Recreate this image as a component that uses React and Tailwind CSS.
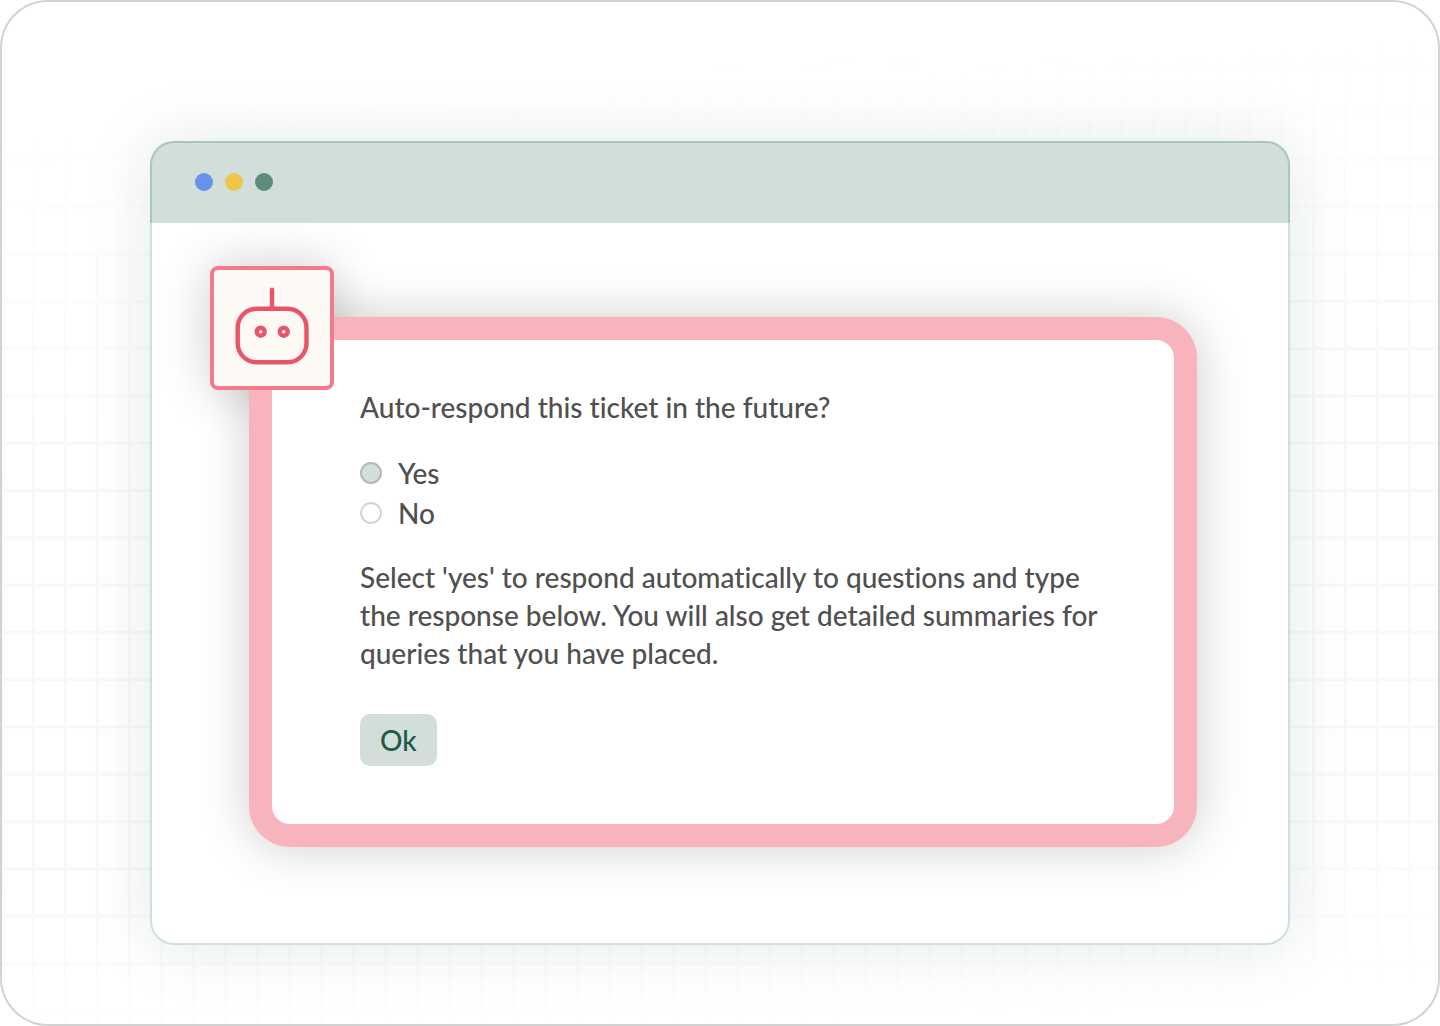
import { useState } from 'react';

const OPTIONS = [
  { value: 'yes', label: 'Yes' },
  { value: 'no', label: 'No' },
];

function GridBackdrop() {
  return (
    <svg
      aria-hidden="true"
      className="absolute inset-0 h-full w-full mask-[linear-gradient(176deg,transparent_10%,black_45%,black_78%,transparent_97%)]"
    >
      <defs>
        <pattern id="grid" x="-2" y="14" width="32" height="47.3" patternUnits="userSpaceOnUse">
          <path d="M1.5 0V47.3M0 1.5H32" stroke="#f8f8f8" strokeWidth="3" fill="none" />
        </pattern>
      </defs>
      <rect width="100%" height="100%" fill="url(#grid)" />
    </svg>
  );
}

function BotIcon() {
  return (
    <svg
      viewBox="0 0 116 116"
      className="h-full w-full"
      fill="none"
      stroke="#ea5466"
      strokeWidth="4.4"
      strokeLinecap="round"
      aria-hidden="true"
    >
      <path d="M58 19.8V38" />
      <rect x="23.7" y="38.7" width="68.8" height="53.6" rx="19" />
      <circle cx="46.7" cy="61.7" r="4" />
      <circle cx="69.7" cy="61.7" r="4" />
    </svg>
  );
}

function WindowBar() {
  return (
    <div className="flex h-[82px] items-center gap-3 rounded-t-3xl border-2 border-b-0 border-[#a9c5bd] bg-[#d1deda] px-[43px] pb-0.5">
      <span className="size-[18px] rounded-full bg-[#6593e8]" />
      <span className="size-[18px] rounded-full bg-[#ecc846]" />
      <span className="size-[18px] rounded-full bg-[#5e8a7a]" />
    </div>
  );
}

function AutoRespondDialog() {
  const [choice, setChoice] = useState('yes');

  return (
    <div className="relative isolate">
      {/* the badge casts its shadow behind the dialog frame */}
      <div className="absolute -top-[51px] -left-[39px] -z-10 size-[124px] rounded-lg shadow-[0_0_50px_rgba(0,0,0,0.2)]" />

      <form
        onSubmit={(e) => e.preventDefault()}
        className="rounded-[41px] border-[23px] border-[#f8b4bc] bg-white pt-12 pr-14 pb-[58px] pl-[88px] shadow-[0_0_50px_rgba(0,0,0,0.2)]"
      >
        <fieldset>
          <legend className="mb-[27px]">Auto-respond this ticket in the future?</legend>
          {OPTIONS.map(({ value, label }) => (
            <label key={value} className="flex h-10 items-center gap-4">
              <input
                type="radio"
                name="auto-respond"
                value={value}
                checked={choice === value}
                onChange={() => setChoice(value)}
                className="size-[22px] appearance-none rounded-full border-2 border-[#d4d4d4] bg-white checked:border-[#aebbb7] checked:bg-[#d1deda]"
              />
              {label}
            </label>
          ))}
        </fieldset>

        <p className="mt-[25px]">
          Select 'yes' to respond automatically to questions and type the response below. You will also get detailed
          summaries for queries that you have placed.
        </p>

        <button type="submit" className="mt-[42px] h-[52px] rounded-[10px] bg-[#d1deda] px-5 text-[#1d5a48]">
          Ok
        </button>
      </form>

      <div className="absolute -top-[51px] -left-[39px] size-[124px] rounded-lg border-4 border-[#f07c8b] bg-[#fdfaf6]">
        <BotIcon />
      </div>
    </div>
  );
}

export default function App() {
  return (
    <main className="relative overflow-hidden rounded-[48px] border-2 border-[#d2d2d2] bg-white px-[148px] pt-[139px] pb-[79px] font-['Lato','Liberation_Sans',sans-serif] text-[28px] leading-[38px] font-medium text-[#505050] [font-variant-ligatures:none]">
      <GridBackdrop />
      <section className="relative rounded-3xl bg-white shadow-[0_0_64px_rgba(29,90,72,0.13)]">
        <WindowBar />
        <div className="rounded-b-3xl border-2 border-t-0 border-[#cfe0db] pt-[94px] pr-[91px] pb-24 pl-[97px]">
          <AutoRespondDialog />
        </div>
      </section>
    </main>
  );
}
